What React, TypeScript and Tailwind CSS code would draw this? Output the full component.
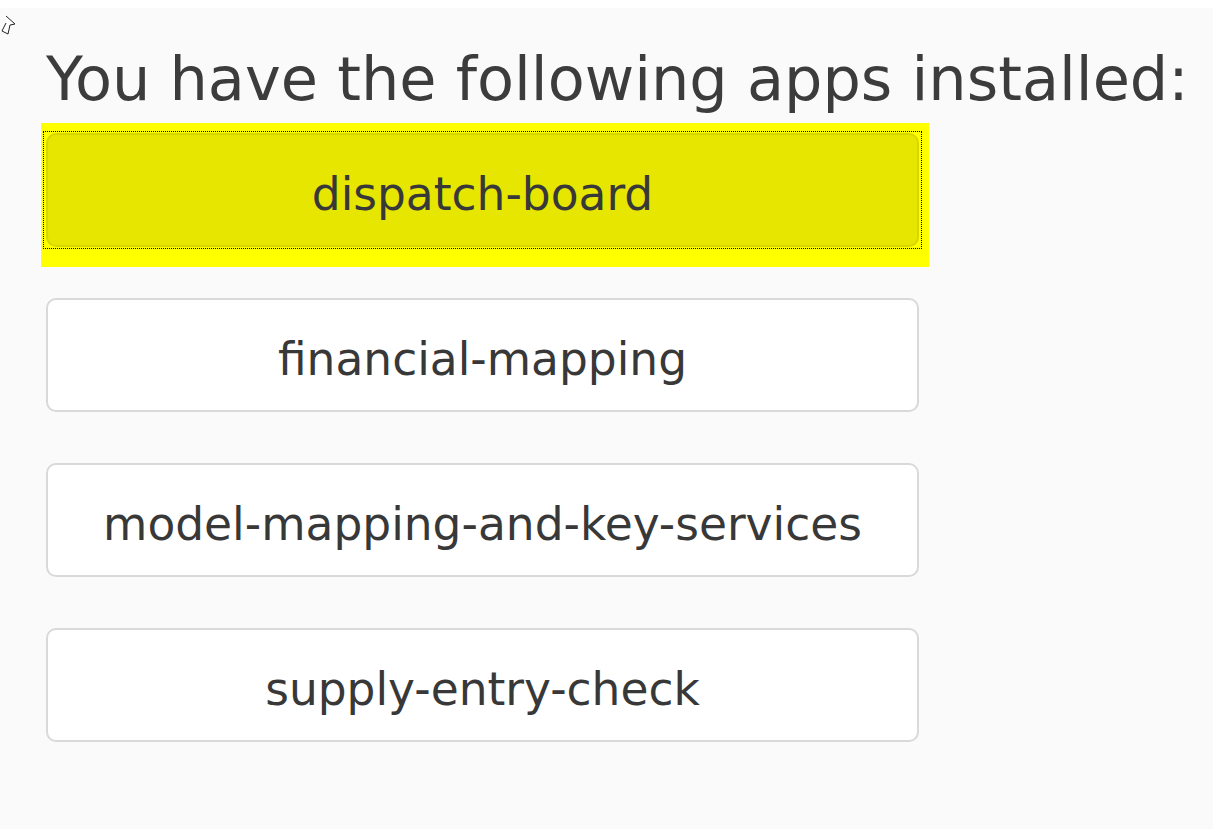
import { useState } from 'react'

const apps = ['dispatch-board', 'financial-mapping', 'model-mapping-and-key-services', 'supply-entry-check']

function AppItem({ name, active, onPick }: { name: string; active: boolean; onPick: () => void }) {
  return (
    <div className={`w-[888px] pl-[2px] pr-[7px] pt-[8px] pb-[18px] ${active ? 'bg-[#ffff00]' : ''}`}>
      <div className={`px-[2px] py-[1px] border border-dotted ${active ? 'border-black' : 'border-transparent'}`}>
        <button
          onClick={onPick}
          className={`w-full h-[114px] pt-[10px] rounded-[10px] border-2 text-[45.5px] text-[#383838] outline-none ${
            active ? 'bg-[#e6e600] border-[#d6d600]' : 'bg-white border-[#d9d9d9]'
          }`}
          style={{ fontFamily: '"DejaVu Sans", Verdana, sans-serif' }}
        >
          {name}
        </button>
      </div>
    </div>
  )
}

export default function App() {
  const [picked, setPicked] = useState(0)

  return (
    <div className="relative min-h-[829px] bg-white" style={{ fontFamily: '"DejaVu Sans", Verdana, sans-serif' }}>
      {/* stray mouse pointer captured in the corner */}
      <svg className="absolute left-0 top-[6px]" width="20" height="26" viewBox="0 0 20 26" fill="none">
        <polyline points="6,2 15,10 10,11 8,20 2,17 6,9" stroke="#222" strokeWidth="1" fill="white" />
      </svg>

      <div className="mt-[8px] min-h-[821px] bg-[#fafafa] pl-[41px] pt-[36px]">
        <h1 className="pl-[5px] text-[60.5px] leading-[70px] text-[#3c3c3c]">You have the following apps installed:</h1>
        <div className="mt-[9px] flex flex-col gap-[21px]">
          {apps.map((a, i) => (
            <AppItem key={a} name={a} active={i === picked} onPick={() => setPicked(i)} />
          ))}
        </div>
      </div>
    </div>
  )
}
